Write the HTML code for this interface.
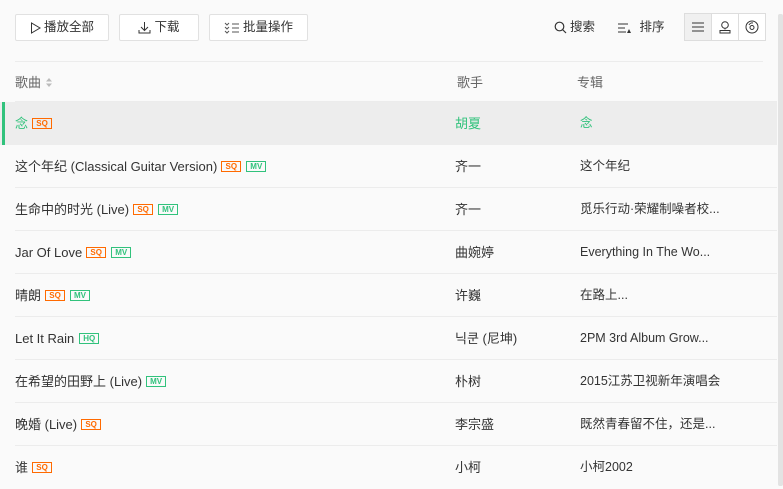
<!DOCTYPE html>
<html><head><meta charset="utf-8"><style>
*{margin:0;padding:0;box-sizing:border-box}
body{width:783px;height:486px;overflow:hidden;background:#fafafa;font-family:"Liberation Sans","Noto Sans CJK SC",sans-serif;font-size:13px;color:#333;position:relative}
.btn{position:absolute;top:14px;height:27px;border:1px solid #e1e1e1;background:#fff;border-radius:2px;display:flex;align-items:center;justify-content:center;gap:3px;font-size:12.5px;color:#333;line-height:1}
.tool{position:absolute;top:14px;height:27px;font-size:12.5px;display:flex;align-items:center;gap:3px;line-height:1}
.vg{position:absolute;left:684px;top:13px;width:82px;height:28px;border:1px solid #ddd;background:#fff;display:flex}
.vg div{flex:1;border-right:1px solid #ddd;display:flex;align-items:center;justify-content:center}
.vg div:last-child{border-right:none}
.hr{position:absolute;left:15px;width:748px;height:1px;background:#ececec}
.hd{position:absolute;top:62px;height:40px;color:#666;font-size:13px;display:flex;align-items:center;gap:4px;line-height:1}
.row{position:absolute;left:0;width:777px;height:43px}
.row span{position:absolute;top:0;height:43px;display:flex;align-items:center;white-space:nowrap;line-height:1}
.c1{left:15px}.c2{left:455px}.c3{left:580px;font-size:12.5px}
.sep{position:absolute;left:15px;right:0;bottom:0;height:1px;background:#ececec}
.b{display:inline-block;width:20px;height:11px;border:1px solid;font-size:8px;line-height:9px;text-align:center;font-weight:bold;margin-left:4px;font-family:"Liberation Sans",sans-serif;font-style:normal}
.sq{color:#ff6a00;border-color:#ff6a00}.mv{color:#31c27c;border-color:#31c27c}
.b.mv2{margin-left:5px}
.sel{background:#ededed}.sel span{color:#31c27c}
.sb{position:absolute;left:778px;top:14px;width:5px;height:472px;background:#e3e3e3;border-radius:2px}
</style></head><body>
<div class="btn" style="left:15px;width:94px"><svg width="11" height="12" viewBox="0 0 11 12"><path d="M1.5 1v10L10 6z" fill="none" stroke="#333"/></svg>播放全部</div>
<div class="btn" style="left:119px;width:80px"><svg width="13" height="13" viewBox="0 0 13 13"><path d="M6.5 1v8M3 6l3.5 3.5L10 6M1 9v3h11V9" fill="none" stroke="#333"/></svg>下载</div>
<div class="btn" style="left:209px;width:99px"><svg width="16" height="12" viewBox="0 0 16 12"><path d="M1 1l2 2 2-2M1 5l2 2 2-2M1 9l2 2 2-2M8 2h7M8 6h7M8 10h7" fill="none" stroke="#555"/></svg>批量操作</div>
<div class="tool" style="left:554px"><svg width="13" height="13" viewBox="0 0 13 13"><circle cx="5.5" cy="5.5" r="4.3" fill="none" stroke="#333" stroke-width="1.2"/><path d="M8.5 8.5l3.5 3.5" stroke="#333" stroke-width="1.2"/></svg>搜索</div>
<div class="tool" style="left:617px"><svg width="16" height="12" viewBox="0 0 16 12"><path d="M1 2h10M1 6h7M1 10h8" stroke="#333"/><path d="M10 11l2-4 2 4z" fill="#333"/></svg>&nbsp;排序</div>
<div class="vg"><div style="background:#f0f0f0"><svg width="14" height="12"><path d="M1 2h12M1 6h12M1 10h12" stroke="#333"/></svg></div><div><svg width="14" height="14"><circle cx="7" cy="5" r="3.3" fill="none" stroke="#333"/><path d="M7 8.5v1M2 13v-2.5h10V13z" fill="none" stroke="#333"/></svg></div><div><svg width="14" height="14"><circle cx="7" cy="7" r="6" fill="none" stroke="#333"/><circle cx="7" cy="7.5" r="2" fill="none" stroke="#333"/><path d="M4 5a3.5 3.5 0 0 1 4-2" fill="none" stroke="#333"/></svg></div></div>
<div class="hr" style="top:61px"></div>
<div class="hd" style="left:15px">歌曲 <svg width="8" height="11"><path d="M4 1l3 3.5H1zM4 10l3-3.5H1z" fill="#bbb"/></svg></div>
<div class="hd" style="left:457px">歌手</div>
<div class="hd" style="left:577px">专辑</div>
<div class="hr" style="top:101px;width:762px;left:15px"></div>
<div class="row sel" style="top:102px"><div style="position:absolute;left:2px;top:0;width:3px;height:43px;background:#31c27c"></div><span class="c1">念<i class="b sq">SQ</i></span><span class="c2">胡夏</span><span class="c3">念</span></div>
<div class="row" style="top:145px"><span class="c1">这个年纪 (Classical Guitar Version)<i class="b sq">SQ</i><i class="b mv mv2">MV</i></span><span class="c2">齐一</span><span class="c3">这个年纪</span><div class="sep"></div></div>
<div class="row" style="top:188px"><span class="c1">生命中的时光 (Live)<i class="b sq">SQ</i><i class="b mv mv2">MV</i></span><span class="c2">齐一</span><span class="c3">觅乐行动·荣耀制噪者校...</span><div class="sep"></div></div>
<div class="row" style="top:231px"><span class="c1">Jar Of Love<i class="b sq">SQ</i><i class="b mv mv2">MV</i></span><span class="c2">曲婉婷</span><span class="c3">Everything In The Wo...</span><div class="sep"></div></div>
<div class="row" style="top:274px"><span class="c1">晴朗<i class="b sq">SQ</i><i class="b mv mv2">MV</i></span><span class="c2">许巍</span><span class="c3">在路上...</span><div class="sep"></div></div>
<div class="row" style="top:317px"><span class="c1">Let It Rain<i class="b mv mv2">HQ</i></span><span class="c2">닉쿤 (尼坤)</span><span class="c3">2PM 3rd Album Grow...</span><div class="sep"></div></div>
<div class="row" style="top:360px"><span class="c1">在希望的田野上 (Live)<i class="b mv">MV</i></span><span class="c2">朴树</span><span class="c3">2015江苏卫视新年演唱会</span><div class="sep"></div></div>
<div class="row" style="top:403px"><span class="c1">晚婚 (Live)<i class="b sq">SQ</i></span><span class="c2">李宗盛</span><span class="c3">既然青春留不住，还是...</span><div class="sep"></div></div>
<div class="row" style="top:446px"><span class="c1">谁<i class="b sq">SQ</i></span><span class="c2">小柯</span><span class="c3">小柯2002</span></div>
<div class="sb"></div>
</body></html>
